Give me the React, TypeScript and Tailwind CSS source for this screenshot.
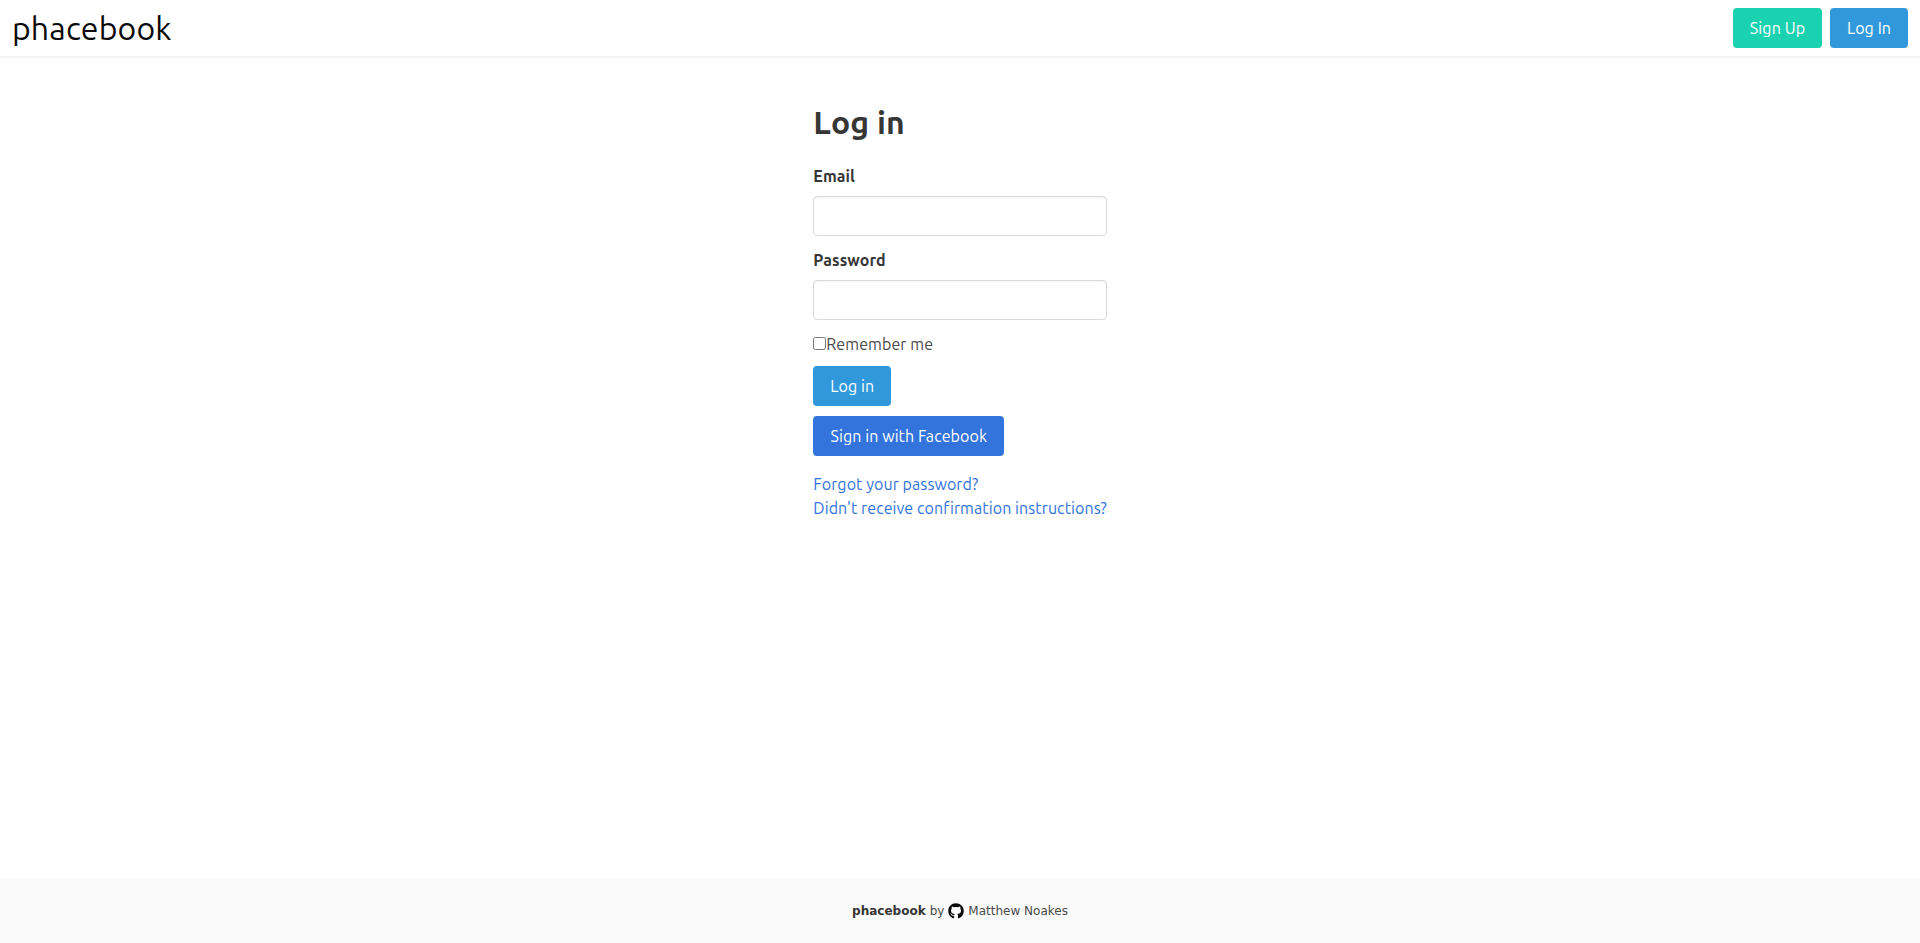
import { FaGithub } from "react-icons/fa"

function Field({ label, type }: { label: string; type: string }) {
  return (
    <div className="mb-3">
      <label className="block mb-2 font-bold text-[#363636] leading-6">{label}</label>
      <input type={type} className="block w-full h-10 bg-white border border-[#dbdbdb] rounded-[4px] px-3 shadow-[inset_0_1px_2px_rgba(10,10,10,0.05)] outline-none" />
    </div>
  )
}

export default function App() {
  return (
    <div className="min-h-screen flex flex-col bg-white text-base text-[#4a4a4a] font-['Ubuntu','Noto_Sans',sans-serif]">
      {/* Navbar */}
      <nav className="h-[58px] flex items-center justify-between pl-3 pr-3 border-b-2 border-[#f5f5f5]">
        <a href="#" className="text-[32px] leading-10 text-[#0a0a0a] tracking-[0.15px]">phacebook</a>
        <div className="flex items-center gap-2 tracking-[0.1px]">
          <a href="#" className="h-10 w-[89px] flex items-center justify-center rounded-[4px] bg-[#1ad1b0] text-white">Sign Up</a>
          <a href="#" className="h-10 w-[78px] flex items-center justify-center rounded-[4px] bg-[#3298dc] text-white">Log In</a>
        </div>
      </nav>

      <main className="flex-1 flex justify-center pt-[44px]">
        <div className="w-[293.4px] tracking-[0.09px]">
          <h1 className="text-[32px] leading-10 font-bold text-[#363636] mb-[22px]">Log in</h1>
          <form>
            <Field label="Email" type="email" />
            <Field label="Password" type="password" />
            <div className="flex items-center h-6 mb-[10px] leading-6">
              <input type="checkbox" className="w-[13px] h-[13px] m-0 mb-px" />
              <span>Remember me</span>
            </div>
            <div className="flex flex-col items-start gap-[10px]">
              <button type="button" className="h-10 w-[78px] rounded-[4px] bg-[#3298dc] text-white">Log in</button>
              <button type="button" className="h-10 w-[191px] rounded-[4px] bg-[#3273dc] text-white">Sign in with Facebook</button>
            </div>
          </form>
          <div className="mt-4 leading-6 text-[#3273dc] whitespace-nowrap">
            <a href="#" className="block">Forgot your password?</a>
            <a href="#" className="block">Didn't receive confirmation instructions?</a>
          </div>
        </div>
      </main>

      <footer className="h-[65px] bg-[#fafafa] flex items-center justify-center gap-[4px] font-['DejaVu_Sans',sans-serif] text-xs text-[#4a4a4a]">
        <strong className="font-bold text-[#363636]">phacebook</strong>
        <span>by</span>
        <FaGithub className="w-4 h-4 text-[#0a0a0a]" />
        <span>Matthew Noakes</span>
      </footer>
    </div>
  )
}
